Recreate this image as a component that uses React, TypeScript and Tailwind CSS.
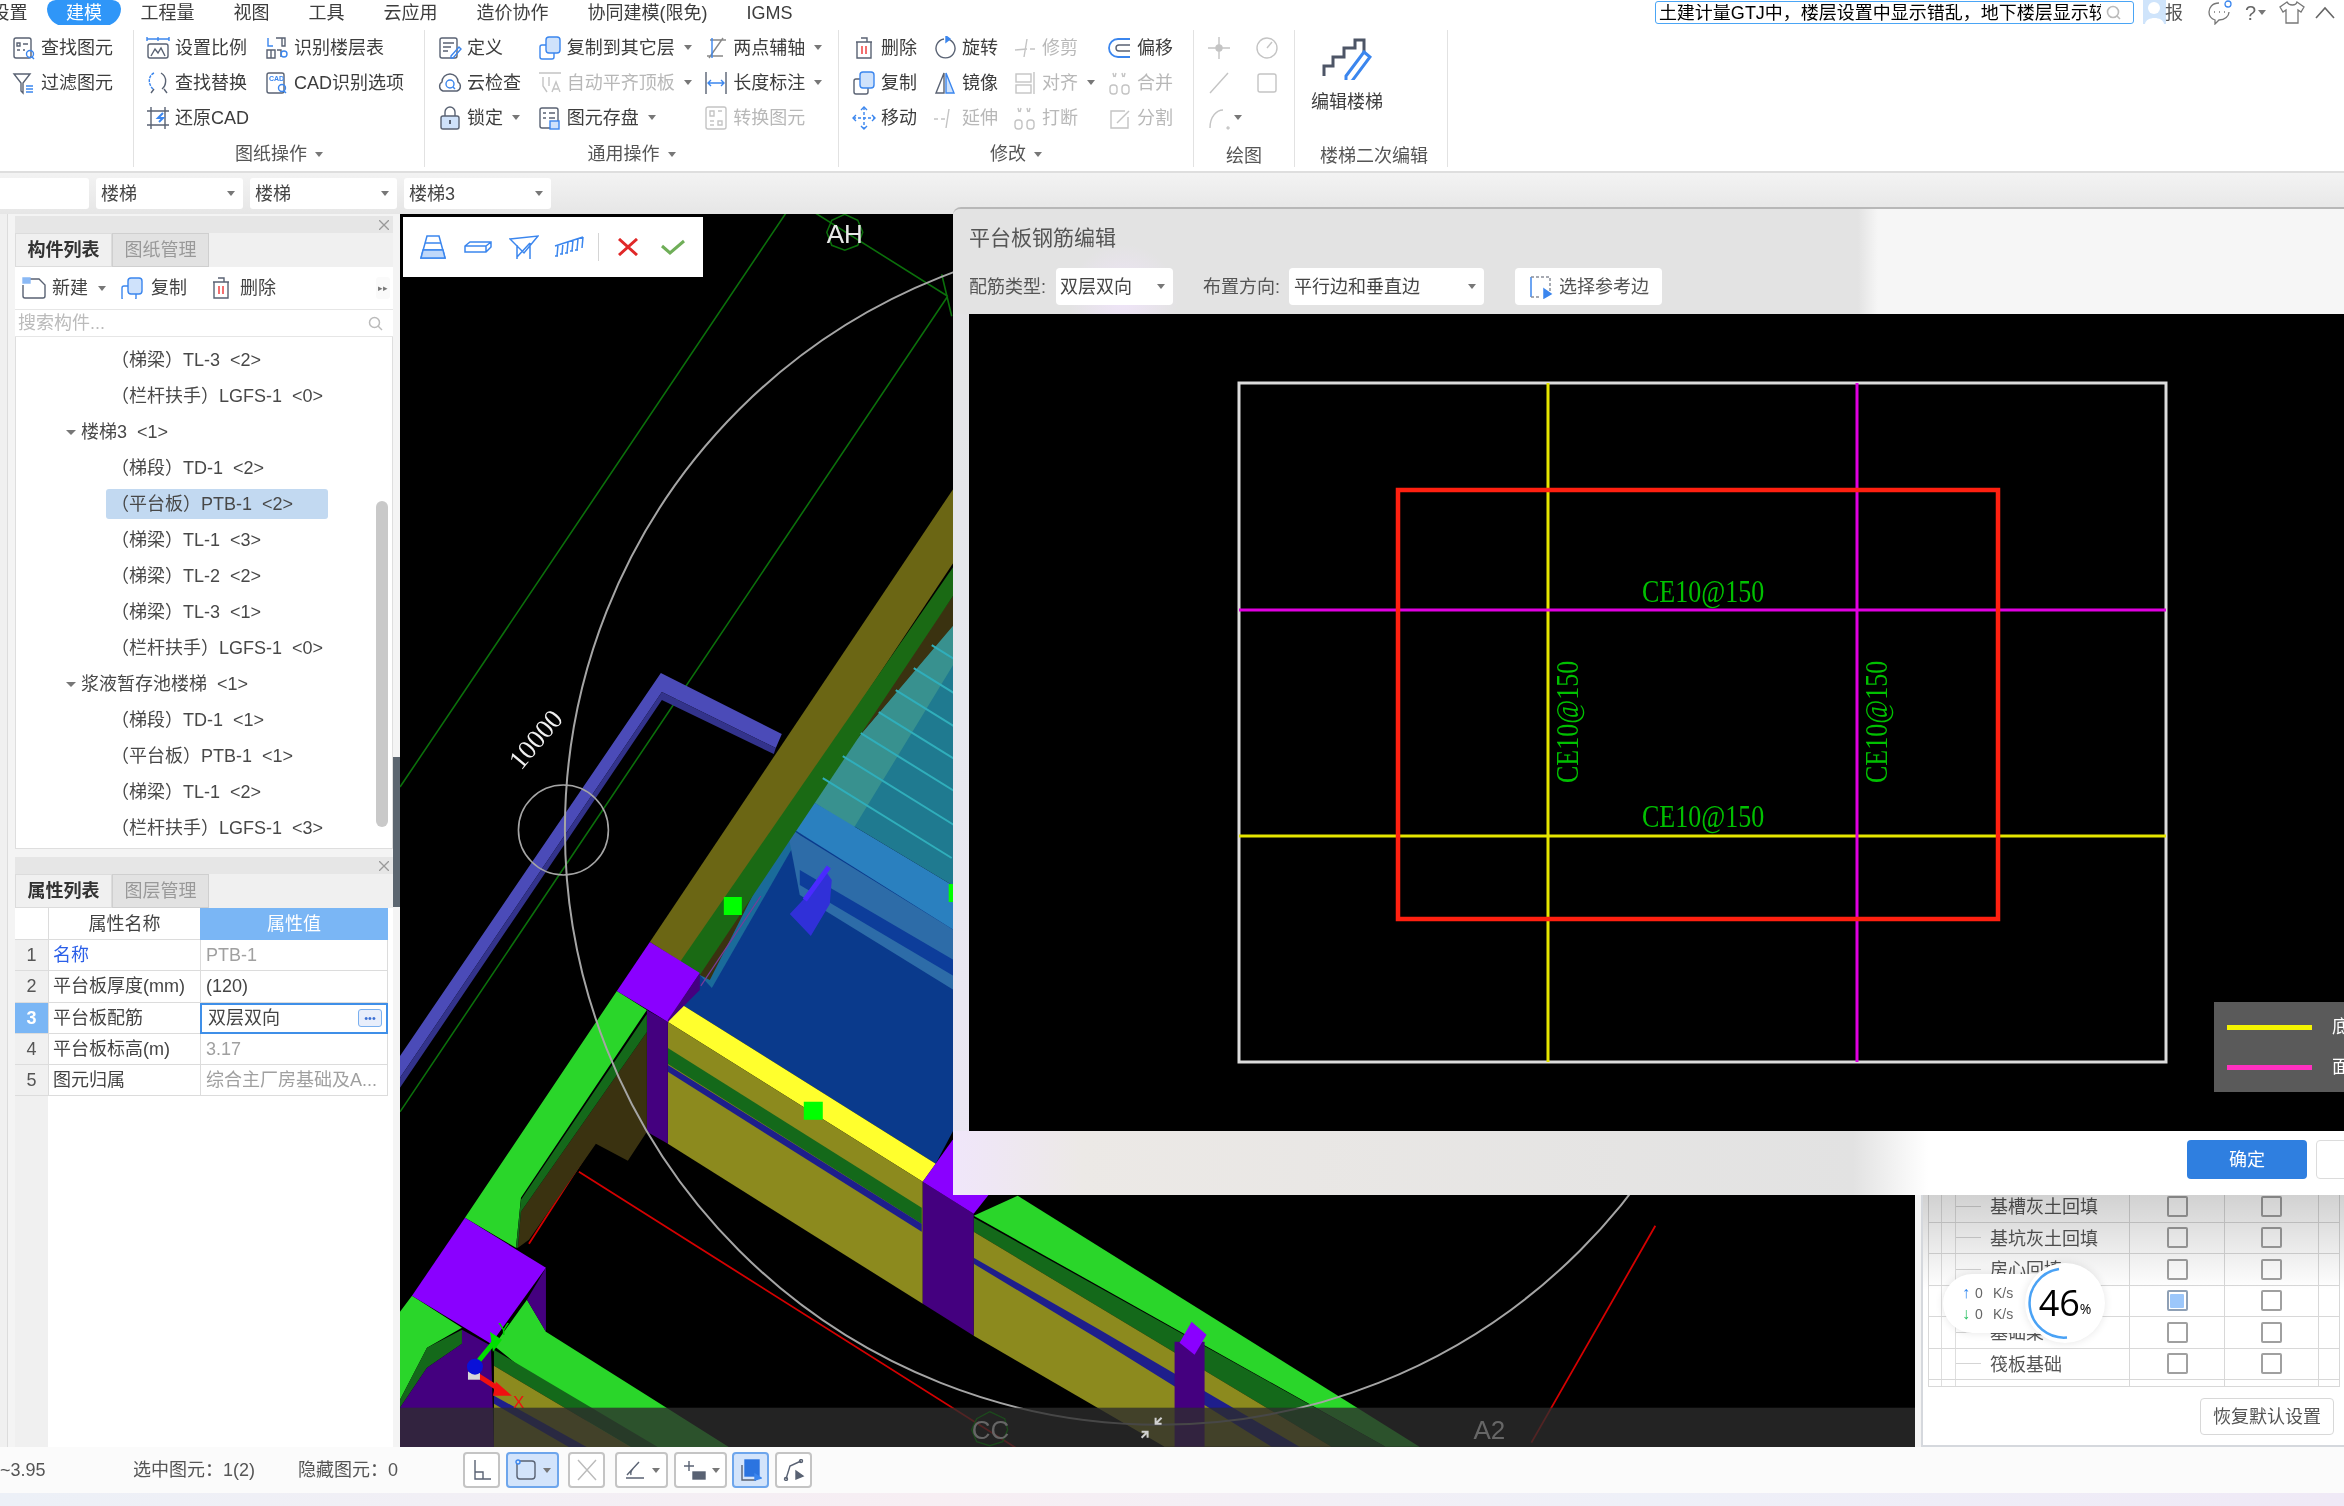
import type { ReactNode } from 'react'

const ink = '#596273'
const blue = '#3b86ee'

function Ic({ children, gray, w = 24, h = 24 }: { children: ReactNode; gray?: boolean; w?: number; h?: number }) {
  return (
    <svg width={w} height={h} viewBox={`0 0 ${w} ${h}`} fill="none" stroke={gray ? '#c4c4c4' : ink} strokeWidth="1.4" className="shrink-0">
      {children}
    </svg>
  )
}

function Caret({ className = '' }: { className?: string }) {
  return <span className={`inline-block shrink-0 border-x-[4px] border-t-[5px] border-x-transparent border-t-[#777] ${className}`} />
}

const icons: Record<string, ReactNode> = {
  find: (<><rect x="2" y="2" width="17" height="20" rx="2" /><path d="M5 7h3v3H5zM11 8h5M5 14h3M11 14h2" /><circle cx="18" cy="18" r="3.5" stroke={blue} /><path d="M20 21l2 2" stroke={blue} /></>),
  filter: (<><path d="M2 3h16l-7 9v10l-2-2v-8z" /><path d="M14 15h7M14 18h7M14 21h7" stroke={blue} /></>),
  scale: (<><path d="M1 3h22M1 1v4M23 1v4M12 1v4" stroke={blue} /><rect x="2" y="8" width="20" height="14" rx="2" /><path d="M5 20l4-7 3 4 3-5 4 8" /></>),
  floor: (<><path d="M3 2v8h5" stroke={blue} /><path d="M11 2h9v8h-3V2M2 14h8v8H2zM6 14v8M12 14h4v7" /><circle cx="19" cy="18" r="3" stroke={blue} /></>),
  replace: (<><path d="M8 2C3 4 1 12 7 18" stroke={blue} strokeDasharray="3 1" /><path d="M15 2c7 4 5 13 1 16M8 18l-3 4M18 18l3 4" /></>),
  cadopt: (<><rect x="2" y="2" width="17" height="20" rx="2" /><text x="4" y="10" fontSize="7" fill={blue} stroke="none" fontWeight="700">CAD</text><circle cx="17" cy="17" r="3.5" stroke={blue} /><path d="M19 20l2 2" stroke={blue} /></>),
  undo: (<><path d="M1 5h22M1 19h22M5 1v22M19 1v22" /><path d="M17 7l-5 5h5l-4 4" stroke={blue} strokeWidth="2" /></>),
  define: (<><rect x="2" y="2" width="17" height="20" rx="2" /><path d="M5 7h11M5 11h8M5 15h5" /><path d="M13 20l8-9 2 2-8 9h-2z" stroke={blue} /></>),
  cloud: (<><path d="M5 20a5 5 0 0 1-1-9 8 8 0 0 1 16 0 5 5 0 0 1-1 9z" /><circle cx="12" cy="13" r="4" stroke={blue} /><path d="M15 16l2 2" stroke={blue} /></>),
  lock: (<><path d="M7 10V6a5 5 0 0 1 10 0v4" /><rect x="3" y="10" width="18" height="13" rx="2" fill="#cfe2fb" /><path d="M12 14v4" strokeWidth="2" /></>),
  copy: (<><rect x="2" y="9" width="14" height="14" rx="2" stroke={blue} /><rect x="8" y="1" width="14" height="16" rx="3" fill="#cfe2fb" stroke={blue} /></>),
  copy2: (<><rect x="2" y="8" width="14" height="15" rx="2" /><rect x="8" y="1" width="14" height="16" rx="3" fill="#cfe2fb" stroke={blue} /></>),
  align: (<><path d="M1 2h22M5 6v9l4 6M11 6v9M14 21l4-10 4 10M15 18h5" /></>),
  save: (<><rect x="2" y="2" width="18" height="20" rx="2" /><path d="M5 7h3M11 7h6M5 12h3M11 12h6" /><rect x="12" y="15" width="9" height="8" stroke={blue} fill="#cfe2fb" /></>),
  axis: (<><path d="M6 4h16M3 20h16M19 2L5 22" stroke="#888" /><path d="M8 2v20" stroke={blue} /></>),
  dim: (<><path d="M2 1v22M22 1v22" /><path d="M4 12h16M7 9l-3 3 3 3M17 9l3 3-3 3" stroke={blue} /></>),
  convert: (<><rect x="2" y="1" width="20" height="22" rx="2" /><path d="M6 5h4v5H6zM14 5h4M14 15h4v4h-4zM6 15h4M6 19h4" /></>),
  del: (<><path d="M4 6h16M9 2h6v4M5 6v16h14V6" /><path d="M10 10v8M14 10v8" stroke="#e33" /></>),
  rotate: (<><path d="M11 3a9.5 9.5 0 1 0 3 0" /><path d="M13 0l4 3-4 3z" fill={blue} stroke={blue} /></>),
  trim: (<><path d="M2 14l12-1M17 13h5M14 3l-3 18" /></>),
  offset: (<><path d="M22 3H10a9 9 0 0 0 0 18h12" stroke={blue} strokeWidth="1.8" /><path d="M22 9H11a3 3 0 0 0 0 6h11" /></>),
  mirror: (<><path d="M11 2L3 22h8z" /><path d="M13 2l8 20h-8z" fill="#cfe2fb" stroke={blue} /></>),
  alignr: (<><path d="M21 1v22" /><rect x="3" y="3" width="15" height="8" /><rect x="3" y="14" width="15" height="8" /></>),
  merge: (<><path d="M5 2l1 4M8 2L7 6M17 2l-1 4M14 2l1 4" /><rect x="2" y="14" width="7" height="9" rx="3" /><rect x="14" y="14" width="7" height="9" rx="3" /></>),
  move: (<><path d="M12 1v22M1 12h22" stroke={blue} strokeDasharray="3 2" /><path d="M9 4l3-3 3 3M9 20l3 3 3-3M4 9l-3 3 3 3M20 9l3 3-3 3" stroke={blue} /></>),
  extend: (<><path d="M1 13h4M8 13h4M16 3l-3 19" /></>),
  brk: (<><path d="M5 2l1 4M8 2L7 6M17 2l-1 4M14 2l1 4" /><rect x="2" y="14" width="7" height="9" rx="3" /><rect x="14" y="14" width="7" height="9" rx="3" /></>),
  split: (<><path d="M17 5H3v17h17V11" /><path d="M9 17l12-12" /></>),
  pt: (<><path d="M12 1v22M1 12h22" /><circle cx="12" cy="12" r="3" fill="#c4c4c4" /></>),
  dial: (<><circle cx="12" cy="12" r="10" /><path d="M12 12l5-6" /></>),
  line: (<><path d="M3 22L21 2" /></>),
  rect: (<><rect x="3" y="3" width="18" height="18" rx="2" /></>),
  arc: (<><path d="M3 22C3 10 10 4 16 4M21 21a1 1 0 1 0 .1 0" /></>),
}

function Tool({ icon, label, gray, caret }: { icon: string; label: string; gray?: boolean; caret?: boolean }) {
  return (
    <div className={`flex h-[35px] items-center gap-[5px] whitespace-nowrap ${gray ? 'text-[#b8b8b8]' : 'text-[#3d3d3d]'}`}>
      <Ic gray={gray}>{icons[icon]}</Ic>
      <span>{label}</span>
      {caret && <Caret className="ml-[4px]" />}
    </div>
  )
}

function Group({ width, label, caret, labelClass = '', children }: { width: number; label: string; caret?: boolean; labelClass?: string; children: ReactNode }) {
  return (
    <div style={{ width }} className="flex h-[137px] shrink-0 flex-col border-r border-[#e2e2e2]">
      <div className="flex h-[105px]">{children}</div>
      <div className={`mt-auto flex h-[26px] items-center justify-center gap-[8px] text-[#555] ${labelClass}`}>
        {label}
        {caret && <Caret />}
      </div>
    </div>
  )
}

function MenuBar() {
  const items = ['设置', '建模', '工程量', '视图', '工具', '云应用', '造价协作', '协同建模(限免)', 'IGMS']
  return (
    <div className="flex h-[25px] items-center overflow-hidden bg-white text-[#3d3d3d]">
      <div className="ml-[-28px] flex">
        {items.map((m) => (
          <div
            key={m}
            className={`flex h-[26px] items-center whitespace-nowrap ${m === '建模' ? 'rounded-b-[20px] rounded-t-[10px] bg-[#2f96f8] px-[19px] text-white' : 'px-[19.5px]'}`}
          >
            {m}
          </div>
        ))}
      </div>
      <div className="ml-auto flex items-center">
        <div className="flex h-[23px] w-[479px] items-center justify-between rounded-[3px] border border-[#4aa5f5] px-[3px]">
          <span className="w-[442px] overflow-hidden whitespace-nowrap text-black">土建计量GTJ中，楼层设置中显示错乱，地下楼层显示较</span>
          <svg width="16" height="16" viewBox="0 0 16 16" fill="none" stroke="#bbb" strokeWidth="1.6" className="mr-[8px]">
            <circle cx="7" cy="7" r="5.5" />
            <path d="M11 11l3 3" />
          </svg>
        </div>
        <svg width="25" height="25" viewBox="0 0 25 25" className="ml-[8px]">
          <rect x="1" y="0" width="23" height="24" fill="#cfe4fb" />
          <circle cx="12" cy="8" r="6" fill="#fff" />
          <path d="M3 24c1-8 18-8 19 0z" fill="#fff" />
        </svg>
        <span className="ml-[-2px] w-[18px] text-[#555]">报</span>
        <svg width="26" height="25" viewBox="0 0 26 25" fill="none" stroke="#777" strokeWidth="1.3" className="ml-[24px]">
          <path d="M12 3C5 3 2 8 2 12s3 7 6 8v4l4-4c6 0 10-4 10-8" />
          <path d="M7 12h1M12 12h1M17 12h1" />
          <circle cx="21" cy="4" r="3" stroke={blue} />
        </svg>
        <span className="ml-[12px] text-[20px] text-[#666]">?</span>
        <Caret className="ml-[2px] border-x-[3px]" />
        <svg width="28" height="25" viewBox="0 0 28 25" fill="none" stroke="#777" strokeWidth="1.3" className="ml-[12px]">
          <path d="M9 2L2 7l3 5 3-2v13h12V10l3 2 3-5-7-5c-1 4-8 4-10 0z" />
        </svg>
        <svg width="22" height="14" viewBox="0 0 22 14" fill="none" stroke="#666" strokeWidth="1.6" className="ml-[8px] mr-[8px]">
          <path d="M2 12l9-10 9 10" />
        </svg>
      </div>
    </div>
  )
}

function Ribbon() {
  return (
    <div className="flex h-[148px] border-b-2 border-[#dedede] bg-white pt-[5px]">
      <Group width={134} label="">
        <div className="pl-[12px]">
          <Tool icon="find" label="查找图元" />
          <Tool icon="filter" label="过滤图元" />
        </div>
      </Group>
      <Group width={291} label="图纸操作" caret>
        <div className="w-[131px] pl-[12px]">
          <Tool icon="scale" label="设置比例" />
          <Tool icon="replace" label="查找替换" />
          <Tool icon="undo" label="还原CAD" />
        </div>
        <div>
          <Tool icon="floor" label="识别楼层表" />
          <Tool icon="cadopt" label="CAD识别选项" />
        </div>
      </Group>
      <Group width={414} label="通用操作" caret>
        <div className="w-[113px] pl-[13px]">
          <Tool icon="define" label="定义" />
          <Tool icon="cloud" label="云检查" />
          <Tool icon="lock" label="锁定" caret />
        </div>
        <div className="w-[167px]">
          <Tool icon="copy" label="复制到其它层" caret />
          <Tool icon="align" label="自动平齐顶板" gray caret />
          <Tool icon="save" label="图元存盘" caret />
        </div>
        <div className="w-[134px]">
          <Tool icon="axis" label="两点辅轴" caret />
          <Tool icon="dim" label="长度标注" caret />
          <Tool icon="convert" label="转换图元" gray />
        </div>
      </Group>
      <Group width={355} label="修改" caret>
        <div className="w-[94px] pl-[13px]">
          <Tool icon="del" label="删除" />
          <Tool icon="copy2" label="复制" />
          <Tool icon="move" label="移动" />
        </div>
        <div className="w-[80px]">
          <Tool icon="rotate" label="旋转" />
          <Tool icon="mirror" label="镜像" />
          <Tool icon="extend" label="延伸" gray />
        </div>
        <div className="w-[95px]">
          <Tool icon="trim" label="修剪" gray />
          <Tool icon="alignr" label="对齐" gray caret />
          <Tool icon="brk" label="打断" gray />
        </div>
        <div>
          <Tool icon="offset" label="偏移" />
          <Tool icon="merge" label="合并" gray />
          <Tool icon="split" label="分割" gray />
        </div>
      </Group>
      <Group width={101} label="绘图" labelClass="pt-[3px]">
        <div className="w-[61px] pl-[13px]">
          <div className="flex h-[35px] items-center"><Ic gray>{icons.pt}</Ic></div>
          <div className="flex h-[35px] items-center"><Ic gray>{icons.line}</Ic></div>
          <div className="flex h-[35px] items-center gap-[3px]"><Ic gray>{icons.arc}</Ic><Caret /></div>
        </div>
        <div>
          <div className="flex h-[35px] items-center"><Ic gray>{icons.dial}</Ic></div>
          <div className="flex h-[35px] items-center"><Ic gray>{icons.rect}</Ic></div>
        </div>
      </Group>
      <Group width={153} label="楼梯二次编辑" labelClass="pl-[6px] pt-[3px]">
        <div className="flex w-full flex-col items-center pr-[48px] pt-[8px] text-[#3d3d3d]">
          <svg width="50" height="42" viewBox="0 0 50 42" fill="none" strokeWidth="3" className="shrink-0">
            <path d="M2 38V28h9V19h11V10h11V2h9v14" stroke="#4d5566" />
            <path d="M24 38L42 14l6 5-18 24-6 2z" stroke={blue} fill="#fff" />
          </svg>
          <span className="mt-[13px] whitespace-nowrap">编辑楼梯</span>
        </div>
      </Group>
    </div>
  )
}

function FilterRow() {
  return (
    <div className="flex h-[41px] items-start gap-[7px] overflow-hidden bg-gradient-to-b from-[#f3f3f3] to-[#e6e6e6] pt-[5px]">
      {['', '楼梯', '楼梯', '楼梯3'].map((v, i) => (
        <div key={i} className={`flex h-[31px] w-[147px] shrink-0 items-center justify-between rounded-[3px] bg-white pl-[5px] pr-[8px] text-[#444] ${i === 0 ? 'ml-[-58px]' : ''}`}>
          {v}
          <Caret />
        </div>
      ))}
    </div>
  )
}

function PanelHead({ tabs }: { tabs: [string, string] }) {
  return (
    <>
      <div className="flex h-[17px] items-center justify-end bg-[#e6e6e6] pr-[4px]">
        <svg width="10" height="10" viewBox="0 0 10 10" stroke="#999" strokeWidth="1.3"><path d="M0 0l10 10M10 0L0 10" /></svg>
      </div>
      <div className="flex h-[34px] bg-[#f0f0f0]">
        <div className="flex w-[97px] items-center justify-center border border-[#dcdcdc] font-bold text-[#333]">{tabs[0]}</div>
        <div className="flex w-[97px] items-center justify-center border border-[#cfcfcf] bg-[#e2e2e2] text-[#999]">{tabs[1]}</div>
      </div>
    </>
  )
}

const treeRows: [string, boolean?, boolean?][] = [
  ['（梯梁）TL-3  <2>'],
  ['（栏杆扶手）LGFS-1  <0>'],
  ['楼梯3  <1>', true],
  ['（梯段）TD-1  <2>'],
  ['（平台板）PTB-1  <2>', false, true],
  ['（梯梁）TL-1  <3>'],
  ['（梯梁）TL-2  <2>'],
  ['（梯梁）TL-3  <1>'],
  ['（栏杆扶手）LGFS-1  <0>'],
  ['浆液暂存池楼梯  <1>', true],
  ['（梯段）TD-1  <1>'],
  ['（平台板）PTB-1  <1>'],
  ['（梯梁）TL-1  <2>'],
  ['（栏杆扶手）LGFS-1  <3>'],
]

function ComponentPanel() {
  return (
    <div className="flex h-[633px] flex-col">
      <PanelHead tabs={['构件列表', '图纸管理']} />
      <div className="flex h-[42px] items-center bg-white pl-[7px] text-[#444]">
        <svg width="24" height="22" viewBox="0 0 24 22" fill="none" stroke={ink} strokeWidth="1.4">
          <path d="M1 8v11a2 2 0 0 0 2 2h18a2 2 0 0 0 2-2V8l-6-6H8" />
          <path d="M1 1h7v5H1z" fill="#8bb9f5" stroke="#8bb9f5" />
        </svg>
        <span className="ml-[6px]">新建</span>
        <Caret className="ml-[10px]" />
        <span className="ml-[14px]"><Ic h={22}>{icons.copy}</Ic></span>
        <span className="ml-[7px]">复制</span>
        <span className="ml-[22px]"><Ic h={24}>{icons.del}</Ic></span>
        <span className="ml-[7px]">删除</span>
        <div className="ml-auto mr-[3px] flex h-[22px] w-[14px] items-center justify-center rounded-[3px] bg-[#fafafa] text-[9px] text-[#777]">▸▸</div>
      </div>
      <div className="flex h-[28px] items-center justify-between border-y border-[#e6e6e6] bg-white pl-[3px] pr-[10px] text-[#bbb]">
        搜索构件...
        <svg width="15" height="15" viewBox="0 0 15 15" fill="none" stroke="#bbb" strokeWidth="1.5"><circle cx="6.5" cy="6.5" r="5" /><path d="M10 10l4 4" /></svg>
      </div>
      <div className="relative flex-1 border-x border-b border-[#dedede] bg-white pt-[5px] text-[#484848]">
        {treeRows.map(([t, parent, selected], i) => (
          <div key={i} className="flex h-[36px] items-center whitespace-pre">
            {parent ? (
              <>
                <Caret className="ml-[50px] mr-[5px] border-x-[5px]" />
                <span>{t}</span>
              </>
            ) : selected ? (
              <div className="ml-[90px] flex h-[30px] w-[222px] items-center rounded-[3px] bg-[#c2d9f1] pl-[5px]">{t}</div>
            ) : (
              <span className="ml-[95px]">{t}</span>
            )}
          </div>
        ))}
        <div className="absolute right-[4px] top-[164px] h-[326px] w-[12px] rounded-[6px] bg-[#c9c9c9]" />
      </div>
    </div>
  )
}

const propRows = [
  { name: '名称', value: 'PTB-1', nameCls: 'text-[#2b5fe8]', valCls: 'text-[#a0a0a0]' },
  { name: '平台板厚度(mm)', value: '(120)', nameCls: '', valCls: 'text-[#444]' },
  { name: '平台板配筋', value: '双层双向', nameCls: '', valCls: '', active: true },
  { name: '平台板标高(m)', value: '3.17', nameCls: '', valCls: 'text-[#a0a0a0]' },
  { name: '图元归属', value: '综合主厂房基础及A...', nameCls: '', valCls: 'text-[#a0a0a0]' },
]

function PropertyPanel() {
  return (
    <div className="mt-[8px] flex flex-1 flex-col">
      <PanelHead tabs={['属性列表', '图层管理']} />
      <div className="flex flex-1 flex-col bg-white">
        <div className="grid grid-cols-[33px_152px_188px] text-[#444]">
          <div className="h-[32px] border-b border-[#dcdcdc] bg-white" />
          <div className="flex h-[32px] items-center justify-center border-b border-l border-[#dcdcdc]">属性名称</div>
          <div className="flex h-[32px] items-center justify-center bg-[#7ab6f5] text-white">属性值</div>
          {propRows.map((r, i) => (
            <div key={r.name} className="contents">
              <div className={`flex h-[31.3px] items-center justify-center border-b border-[#dcdcdc] ${r.active ? 'bg-[#7ab6f5] font-bold text-white' : 'bg-[#f0f0f0] text-[#555]'}`}>{i + 1}</div>
              <div className={`flex h-[31.3px] items-center border-b border-l border-[#dcdcdc] pl-[4px] ${r.nameCls}`}>{r.name}</div>
              {r.active ? (
                <div className="flex h-[31.3px] items-center justify-between border-2 border-[#3f8fe8] pl-[6px] pr-[4px] text-[#444]">
                  {r.value}
                  <div className="flex h-[18px] w-[24px] items-center justify-center rounded-[3px] border border-[#7ab0ef] bg-[#e8eefb] text-[11px] leading-none text-[#3b6fd4]">•••</div>
                </div>
              ) : (
                <div className={`flex h-[31.3px] items-center overflow-hidden whitespace-nowrap border-b border-l border-r border-[#dcdcdc] pl-[5px] ${r.valCls}`}>{r.value}</div>
              )}
            </div>
          ))}
        </div>
        <div className="w-[33px] flex-1 bg-[#f0f0f0]" />
      </div>
    </div>
  )
}

const shapes: [string, string][] = [
  // rail
  ['#4b4bb8', '400,1056 661,673 782,734 776,748 662,692 400,1078'],
  ['#33338c', '400,1078 662,692 776,748 774,754 662,700 400,1088'],
  // slab, stairs and beam
  ['#0a3a8c', '787,825 954,925 954,1130 936,1164 681,1004'],
  ['#1a6b9a', '700,975 787,825 800,835 712,988'],
  ['#1f7a90', '954,624 807,798 954,886'],
  ['#38918f', '954,624 807,798 854,828 954,664'],
  ['#2a80bf', '787,825 807,798 954,886 954,930'],
  ['#2d6ca8', '787,827 954,930 954,990 800,895'],
  ['#0d3d9a', '800,870 954,960 954,976 800,885'],
  ['#3030d8', '805,898 825,870 832,880 830,904 811,936 790,914'],
  // olive wall behind
  ['#3a3210', '954,595 954,625 807,798 790,822 710,980 690,970'],
  ['#6b6614', '954,488 650,942 686,965 954,562'],
  ['#1a6a14', '954,566 678,965 700,975 954,595'],
  // front wall
  ['#ffff2d', '681,1004 936,1164 923,1182 668,1022'],
  ['#8c8a1e', '668,1022 923,1182 923,1304 668,1144'],
  ['#14691a', '668,1048 922,1208 922,1224 668,1064'],
  ['#1e1e8c', '668,1065 922,1224 922,1232 668,1072'],
  ['#44007f', '647,1010 668,1022 668,1144 647,1132'],
  // left green band
  ['#3a3210', '647,1032 647,1132 628,1161 596,1144 529,1240 518,1248 521,1212'],
  ['#2ad62a', '617,991 647,1010 521,1198 516,1248 465,1218'],
  ['#14691a', '647,1014 647,1032 521,1212 518,1248 516,1248 521,1200'],
  ['#8a00ff', '650,942 700,973 668,1022 617,991'],
  ['#44007f', '700,973 700,990 668,1022 668,1020'],
  // lower right band
  ['#2ad62a', '974,1216 1018,1196 1420,1447 1386,1447'],
  ['#14691a', '974,1218 1386,1447 1332,1447 974,1232'],
  ['#8c8a1e', '974,1232 1332,1447 1165,1447 974,1336'],
  ['#1e1e8c', '974,1258 1100,1330 1300,1447 1272,1447 1100,1340 974,1264'],
  ['#44007f', '923,1182 974,1214 974,1336 923,1304'],
  ['#8a00ff', '953,1140 923,1182 974,1214 1004,1176'],
  ['#44007f', '1175,1342 1205,1342 1205,1447 1175,1447'],
  ['#8a00ff', '1192,1322 1207,1335 1195,1355 1180,1343'],
  // bottom left corner
  ['#2ad62a', '527,1300 546,1332 730,1448 620,1448 494,1346'],
  ['#14691a', '494,1350 659,1448 632,1448 494,1366'],
  ['#8c8a1e', '494,1366 632,1448 494,1448'],
  ['#1e1e8c', '494,1396 588,1448 570,1448 494,1404'],
  ['#2ad62a', '412,1296 462,1328 427,1348 400,1400 400,1312'],
  ['#14691a', '462,1330 462,1344 427,1368 400,1408 400,1400 427,1348'],
  ['#44007f', '462,1330 491,1346 494,1448 400,1448 400,1408 427,1368 462,1344'],
  ['#8a00ff', '465,1218 546,1268 491,1344 412,1296'],
  ['#44007f', '546,1268 546,1332 527,1300'],
]

function Model() {
  const stepStarts = [[823, 778], [843, 756], [861, 733], [879, 712], [896, 690], [914, 668], [932, 645]]
  return (
    <svg viewBox="400 214 1516 1233" className="block h-full w-full">
      <path d="M786 213L400 787M948 296L400 1112M816 213L948 296M942 274L952 316" stroke="#0b6f0b" strokeWidth="1.6" fill="none" />
      <polygon points="845,214 858,220 863,232 858,245 845,250 832,245 827,232 832,220" fill="none" stroke="#0b6f0b" strokeWidth="1.5" />
      <path d="M596 1140L529 1244M579 1172L1016 1448M1656 1226L1532 1443" stroke="#d40000" strokeWidth="1.8" fill="none" />
      {shapes.map(([fill, pts], i) => (
        <polygon key={i} fill={fill} points={pts} />
      ))}
      {stepStarts.map(([x, y]) => (
        <line key={x} x1={x} y1={y} x2={x + 129} y2={y + 80} stroke="#30aebb" strokeWidth="2" />
      ))}
      <path d="M761 896L701 986" stroke="#7a3a9a" strokeWidth="1.2" />
      <path d="M829 867L805 900" stroke="#4a2aff" strokeWidth="5" />
      <path d="M724 897h18v18h-18zM804 1102h19v18h-19zM949 884h5v18h-5z" fill="#00ff00" />
      <circle cx="1160" cy="830" r="595" fill="none" stroke="#a5a5a5" strokeWidth="2" />
      <ellipse cx="563.5" cy="830" rx="45" ry="45" fill="none" stroke="#a5a5a5" strokeWidth="1.6" />
      <text x="0" y="0" transform="translate(521 771) rotate(-50)" fill="#f0f0f0" fontSize="27" fontFamily="Liberation Serif, serif">10000</text>
      <text x="827" y="243" fill="#e8e8e8" fontSize="26" fontFamily="Liberation Sans, sans-serif">AH</text>
      {/* axis gizmo */}
      <path d="M478 1362L496 1340" stroke="#00e000" strokeWidth="5" />
      <path d="M490 1332L502 1340L493 1352z" fill="#00e000" />
      <path d="M478 1376L500 1390" stroke="#f01010" strokeWidth="5" />
      <path d="M496 1382L512 1396L493 1396z" fill="#f01010" />
      <rect x="468" y="1372" width="12" height="8" fill="#d8d8d8" />
      <circle cx="475" cy="1367" r="8" fill="#0a10d8" />
      <text x="498" y="1335" fill="#00d000" fontSize="17" fontFamily="Liberation Sans, sans-serif">Y</text>
      <text x="513" y="1408" fill="#f01010" fontSize="17" fontFamily="Liberation Sans, sans-serif">X</text>
      {/* bottom band */}
      <rect x="400" y="1408" width="1516" height="40" fill="#2d2d2d" fillOpacity="0.78" />
      <polygon points="990,1412 1005,1419 1008,1430 1003,1442 990,1446 977,1442 972,1430 977,1419" fill="none" stroke="#1c4a1c" strokeWidth="1.4" />
      <text x="972" y="1439" fill="#666" fontSize="26" fontFamily="Liberation Sans, sans-serif">CC</text>
      <text x="1474" y="1439" fill="#666" fontSize="26" fontFamily="Liberation Sans, sans-serif">A2</text>
      <path d="M1148 1432l-6 6M1142 1432h6v6M1162 1418l-6 6M1156 1418v6h6" stroke="#d0d0d0" strokeWidth="2" fill="none" />
    </svg>
  )
}

function CanvasBar() {
  return (
    <div className="absolute left-[3px] top-[3px] flex h-[60px] w-[300px] items-center bg-white pl-[16px]">
      <svg width="28" height="26" viewBox="0 0 28 26" fill="none" stroke={blue} strokeWidth="1.5">
        <path d="M8 2h12l6 22H2z" /><path d="M6 9h16M4 16h20" /><path d="M4 16h20l2 8H2z" fill="#bfd8fa" />
      </svg>
      <svg width="28" height="14" viewBox="0 0 28 14" fill="none" stroke={blue} strokeWidth="1.5" className="ml-[17px]">
        <path d="M1 6l5-4h21v5l-5 5H1zM1 6h21v6M22 6l5-4" />
      </svg>
      <svg width="30" height="24" viewBox="0 0 30 24" fill="none" stroke={blue} strokeWidth="1.5" className="ml-[17px]">
        <path d="M1 4l28-3-14 17zM8 10v14M21 8v16M8 22l13-14" />
      </svg>
      <svg width="30" height="22" viewBox="0 0 30 22" fill="none" stroke={blue} strokeWidth="1.5" className="ml-[15px]">
        <path d="M1 10L29 1M4 9l-1 11M9 7L8 18M14 6l-1 11M19 4l-1 11M24 3l-1 11M29 1l-1 11M1 20h3M6 18h3M11 17h3M16 15h3M21 14h3" />
      </svg>
      <div className="ml-[14px] h-[28px] w-px bg-[#d5d5d5]" />
      <svg width="20" height="18" viewBox="0 0 20 18" stroke="#e02828" strokeWidth="3" className="ml-[19px]"><path d="M1 1l18 16M19 1L1 17" /></svg>
      <svg width="24" height="16" viewBox="0 0 24 16" fill="none" stroke="#6fae58" strokeWidth="3" className="ml-[23px]"><path d="M1 7l8 7L23 2" /></svg>
    </div>
  )
}

function Check({ on }: { on?: boolean }) {
  return (
    <div className={`flex h-[21px] w-[21px] shrink-0 items-center justify-center rounded-[2px] border-2 ${on ? 'border-[#8fa0b5] bg-white' : 'border-[#a0a0a0] bg-white'}`}>
      {on && <div className="h-[14px] w-[14px] rounded-[1px] bg-[#9cc7fb]" />}
    </div>
  )
}

function LayerRow({ name, on }: { name: string; on?: boolean }) {
  return (
    <div className="flex h-[31.5px] border-b border-[#d8d8d8] text-[#555]">
      <div className="w-[13px] border-r border-[#dedede]" />
      <div className="w-[14px] border-r border-[#dedede]" />
      <div className="flex w-[174px] items-center border-r border-[#d8d8d8]">
        <div className="h-px w-[25px] bg-[#d5d5d5]" />
        <span className="ml-[9px] whitespace-nowrap pt-[2px]">{name}</span>
      </div>
      <div className="flex w-[95px] items-center justify-center border-r border-[#d8d8d8]"><Check on={on} /></div>
      <div className="flex w-[94px] items-center justify-center border-r border-[#d8d8d8]"><Check /></div>
    </div>
  )
}

function LayerPanel() {
  return (
    <div className="relative ml-[6px] flex flex-1 flex-col justify-end border-b-2 border-l-2 border-[#d5d8dd] bg-white pl-[5px]">
      <div className="relative mr-[4px] w-[412px] border-x border-b border-[#d8d8d8]">
        <LayerRow name="基槽灰土回填" />
        <LayerRow name="基坑灰土回填" />
        <LayerRow name="房心回填" />
        <LayerRow name="独立基础" on />
        <LayerRow name="基础梁" />
        <LayerRow name="筏板基础" />
        <div className="flex h-[6px] overflow-hidden">
          <div className="w-[13px] border-r border-[#dedede]" />
          <div className="w-[14px] border-r border-[#dedede]" />
          <div className="w-[174px] border-r border-[#d8d8d8]" />
          <div className="w-[95px] border-r border-[#d8d8d8]" />
          <div className="w-[94px] border-r border-[#d8d8d8]" />
        </div>
      </div>
      <div className="flex h-[58px] items-start justify-end pr-[10px] pt-[11px]">
        <div className="flex h-[37px] w-[134px] items-center justify-center rounded-[4px] border border-[#d8d8d8] bg-white text-[#555]">恢复默认设置</div>
      </div>
      <div className="absolute inset-x-0 top-[981px] h-[95px] bg-gradient-to-b from-[#0000002e] to-transparent" />
    </div>
  )
}

function StatusBar() {
  const btn = 'flex h-[36px] items-center justify-center rounded-[4px] border-2'
  const plain = `${btn} border-[#c4c4c4] bg-white`
  const active = `${btn} border-[#6ea6ec] bg-[#d3e4fb]`
  return (
    <div className="flex h-[46px] items-center bg-[#fbfbfb] text-[#555]">
      <span className="w-[133px]">~3.95</span>
      <span className="w-[165px]">选中图元：1(2)</span>
      <span className="w-[165px]">隐藏图元：0</span>
      <div className="flex items-center">
        <div className={`${plain} w-[37px]`}><Ic w={22} h={22}><path d="M4 1v19h16M4 13h8v7" /></Ic></div>
        <div className={`${active} ml-[6px] w-[53px] gap-[6px]`}>
          <Ic w={22} h={22}><rect x="2" y="2" width="18" height="18" rx="3" /><circle cx="3" cy="3" r="2" fill="#d3e4fb" stroke={blue} /></Ic>
          <Caret className="border-x-[3px] border-t-[4px]" />
        </div>
        <div className={`${plain} ml-[9px] w-[37px]`}><Ic w={22} h={22}><path d="M2 1l18 20M20 1L2 21" stroke="#bbb" /></Ic></div>
        <div className={`${plain} ml-[10px] w-[53px] gap-[6px]`}>
          <Ic w={22} h={22}><path d="M2 19h18M3 16L15 3M7 16a6 6 0 0 1 2-6" /></Ic>
          <Caret className="border-x-[3px] border-t-[4px]" />
        </div>
        <div className={`${plain} ml-[6px] w-[53px] gap-[6px]`}>
          <Ic w={24} h={22}><path d="M7 2v10M2 7h10" /><rect x="11" y="13" width="12" height="7" fill="#596273" /></Ic>
          <Caret className="border-x-[3px] border-t-[4px]" />
        </div>
        <div className={`${active} ml-[5px] w-[37px]`}>
          <Ic w={22} h={22}><rect x="5" y="1" width="14" height="16" fill="#2b74e0" stroke="#2b74e0" /><path d="M2 6v15h14" /><path d="M15 15l6 4-6 2z" fill={blue} stroke={blue} /></Ic>
        </div>
        <div className={`${plain} ml-[6px] w-[37px]`}>
          <Ic w={22} h={22}><path d="M3 20L7 7l11-5" /><circle cx="3" cy="20" r="1.5" /><circle cx="18" cy="2" r="1.5" /><path d="M13 12l7 5-7 3z" fill={ink} /></Ic>
        </div>
      </div>
    </div>
  )
}

function ReinforcementPlan() {
  const label = { fill: '#00c000', fontSize: 26, fontFamily: 'Liberation Serif, serif' }
  return (
    <svg viewBox="969 314 1475 817" className="block h-full w-full">
      <rect x="1239" y="383" width="927" height="679" fill="none" stroke="#dcdcdc" strokeWidth="3" />
      <path d="M1548 383V1062M1239 836H2166" stroke="#e6e600" strokeWidth="3" />
      <path d="M1857 383V1062M1239 610H2166" stroke="#e000e0" strokeWidth="3" />
      <rect x="1398" y="490" width="600" height="429" fill="none" stroke="#ff2010" strokeWidth="4.5" />
      <text transform="translate(1642 602) scale(1 1.22)" {...label}>CE10@150</text>
      <text transform="translate(1642 827) scale(1 1.22)" {...label}>CE10@150</text>
      <text transform="translate(1578 783) rotate(-90) scale(1 1.22)" {...label}>CE10@150</text>
      <text transform="translate(1887 783) rotate(-90) scale(1 1.22)" {...label}>CE10@150</text>
    </svg>
  )
}

function RebarDialog() {
  const box = 'flex h-[37px] items-center rounded-[4px] bg-white'
  return (
    <div className="absolute left-[953px] top-[207px] flex h-[988px] w-[1491px] flex-col overflow-hidden rounded-t-[8px] border-t-2 border-[#b8b8b8] bg-[linear-gradient(180deg,#e3e3e3_0%,#e6e8ee_50%,#ebe6f3_100%)]">
      <div className="h-[105px] bg-[radial-gradient(circle_at_170px_90px,#efe4f8_0,transparent_55px),linear-gradient(90deg,#e3e3e3_0,#e3e3e3_905px,#f6f6f6_925px)] pl-[16px] text-[#555]">
        <div className="flex h-[59px] items-center pb-[3px] text-[21px]">平台板钢筋编辑</div>
        <div className="flex h-[37px] items-center">
          <span className="w-[87px] whitespace-nowrap">配筋类型:</span>
          <div className={`${box} w-[117px] justify-between pl-[4px] pr-[8px] text-[#444]`}>双层双向<Caret className="border-x-[3px] border-t-[4px]" /></div>
          <span className="ml-[30px] w-[86px] whitespace-nowrap">布置方向:</span>
          <div className={`${box} w-[195px] justify-between pl-[5px] pr-[8px] text-[#444]`}>平行边和垂直边<Caret className="border-x-[3px] border-t-[4px]" /></div>
          <div className={`${box} ml-[31px] w-[147px] pl-[14px]`}>
            <svg width="24" height="24" viewBox="0 0 24 24" fill="none" stroke="#8a8f99" strokeWidth="1.5" strokeDasharray="3 2">
              <path d="M2 2v20" stroke={blue} strokeDasharray="none" />
              <path d="M2 2h19v16M2 22h10" />
              <path d="M15 14l7 5-7 4z" fill={blue} stroke={blue} strokeDasharray="none" />
            </svg>
            <span className="ml-[6px] whitespace-nowrap">选择参考边</span>
          </div>
        </div>
      </div>
      <div className="relative ml-[16px] h-[817px] bg-black">
        <ReinforcementPlan />
        <div className="absolute left-[1245px] top-[688px] flex h-[90px] w-[200px] flex-col justify-center gap-[14px] bg-[#5a5a5a] pl-[13px] text-white">
          <div className="flex h-[26px] items-center gap-[20px]"><div className="h-[5px] w-[85px] bg-[#f4f400]" />底筋</div>
          <div className="flex h-[26px] items-center gap-[20px]"><div className="h-[5px] w-[85px] bg-[#ff30c0]" />面筋</div>
        </div>
      </div>
      <div className="flex h-[64px] items-start justify-end gap-[9px] bg-[linear-gradient(90deg,#f0e6fa_0,#ece9e6_130px,#e2e2e2_900px,#ffffff_975px)] pr-[8px] pt-[9px]">
        <div className="flex h-[39px] w-[120px] items-center justify-center rounded-[4px] bg-[#2f7fe0] text-white">确定</div>
        <div className="flex h-[39px] w-[120px] items-center justify-center rounded-[4px] border border-[#dcdcdc] bg-white text-[#555]">取消</div>
      </div>
    </div>
  )
}

function NetWidget() {
  return (
    <div className="absolute left-[1943px] top-[1263px] flex items-center">
      <div className="flex h-[59px] w-[120px] flex-col justify-center gap-[3px] rounded-l-[30px] bg-white pl-[19px] text-[14px] leading-[18px] text-[#666] shadow-[0_0_8px_#0000001a]">
        <div className="flex items-center"><span className="w-[13px] text-[16px] font-bold text-[#2f86f0]">↑</span><span className="w-[18px]">0</span><span>K/s</span></div>
        <div className="flex items-center"><span className="w-[13px] text-[16px] font-bold text-[#27c060]">↓</span><span className="w-[18px]">0</span><span>K/s</span></div>
      </div>
      <div className="relative ml-[-38px] flex h-[80px] w-[80px] items-center justify-center rounded-full bg-white text-black shadow-[0_0_8px_#0000001a]">
        <svg width="80" height="80" viewBox="0 0 80 80" fill="none" strokeWidth="2.5" className="absolute inset-0">
          <path d="M34 6A34.5 34.5 0 0 0 42 74.5" stroke="#4aa2f5" />
        </svg>
        <span className="font-['Open_Sans',sans-serif] text-[36px] leading-none">46</span>
        <span className="mt-[12px] font-['Open_Sans',sans-serif] text-[14px] leading-none">%</span>
      </div>
    </div>
  )
}

export default function App() {
  return (
    <div className="relative flex h-[1506px] w-[2344px] flex-col overflow-hidden bg-white font-['Liberation_Sans','Noto_Sans_CJK_SC',sans-serif] text-[18px] leading-none blur-[0.5px]">
      <MenuBar />
      <Ribbon />
      <FilterRow />
      <div className="flex h-[1233px] bg-[#f4f4f4]">
        <div className="w-[8px] border-r border-[#dcdcdc] bg-[#f0f0f0]" />
        <div className="ml-[7px] flex w-[378px] flex-col pt-[2px]">
          <ComponentPanel />
          <PropertyPanel />
        </div>
        <div className="mt-[543px] h-[150px] w-[7px] bg-[#5c6670]" />
        <div className="relative w-[1516px] bg-black">
          <Model />
          <CanvasBar />
        </div>
        <LayerPanel />
      </div>
      <StatusBar />
      <div className="flex-1 bg-[linear-gradient(90deg,#ecf0f7,#f7eef3_40%,#eef0f8_70%,#efe9f6)]" />
      <RebarDialog />
      <NetWidget />
    </div>
  )
}
